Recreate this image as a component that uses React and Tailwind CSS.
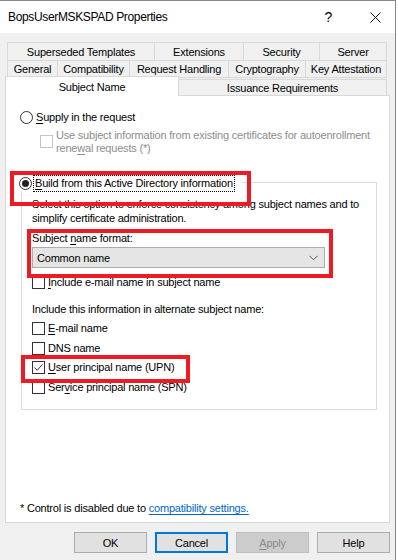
import React from 'react';

// Win10 property sheet: Subject Name tab with red annotation boxes on top
const U = ({ children }) => <span className="underline underline-offset-[2px] decoration-[1px]">{children}</span>;

const Radio = ({ checked }) => (
  <span className="w-[13px] h-[13px] rounded-full border border-[#333] bg-white flex items-center justify-center shrink-0">
    {checked && <span className="w-[7px] h-[7px] rounded-full bg-[#222]" />}
  </span>
);

const Check = ({ checked, disabled }) => (
  <span className={`w-[13px] h-[13px] border bg-white flex items-center justify-center shrink-0 ${disabled ? 'border-[#c4c4c4]' : 'border-[#333]'}`}>
    {checked && (
      <svg width="11" height="11" viewBox="0 0 11 11">
        <path d="M1.5 5.5 L4.2 8.3 L9.5 2.3" fill="none" stroke="#333" strokeWidth="1" />
      </svg>
    )}
  </span>
);

const Tab = ({ w, children }) => (
  <div className={`${w} h-full -ml-px first:ml-0 flex items-center justify-center border border-[#d9d9d9] bg-[#f0f0f0]`}>
    {children}
  </div>
);

const CheckRow = ({ checked, className = '', children }) => (
  <div className={`h-[14px] flex items-center gap-[3px] ${className}`}>
    <Check checked={checked} />
    <span>{children}</span>
  </div>
);

const Btn = ({ children, variant }) => {
  const v = {
    normal: 'bg-[#e1e1e1] border border-[#adadad] text-black',
    default: 'bg-[#e1e1e1] border-2 border-[#0078d7] text-black',
    disabled: 'bg-[#cccccc] border border-[#bfbfbf] text-[#8a8a8a]',
  };
  return (
    <div className={`w-[73px] h-[21px] flex items-center justify-center ${v[variant]}`}>{children}</div>
  );
};

export default function App() {
  return (
    <div className="relative w-[398px] h-[560px] bg-white overflow-hidden font-['Liberation_Sans',Arial,sans-serif] text-[11px] leading-[14px] tracking-[-0.2px] text-black">
      <div className="w-[396px] h-[560px] border-t border-r border-[#888] flex flex-col">
        {/* title bar */}
        <div className="h-[32px] shrink-0 bg-white flex items-center pl-[8px] pr-[14px]">
          <span className="text-[12px] tracking-[-0.35px]">BopsUserMSKSPAD Properties</span>
          <span className="ml-auto text-[14px] mr-[38px]">?</span>
          <svg width="11" height="11" viewBox="0 0 11 11">
            <path d="M0.5 0.5 L10.5 10.5 M10.5 0.5 L0.5 10.5" stroke="#111" strokeWidth="1" />
          </svg>
        </div>

        {/* body */}
        <div className="flex-1 bg-[#f0f0f0] px-[5px] pt-[9px] flex flex-col">
          <div className="ml-[2px] h-[19px] flex">
            <Tab w="w-[148px]">Superseded Templates</Tab>
            <Tab w="w-[90px]">Extensions</Tab>
            <Tab w="w-[77px]">Security</Tab>
            <Tab w="w-[68px]">Server</Tab>
          </div>
          <div className="ml-[2px] -mt-px h-[18px] flex">
            <Tab w="w-[51px]">General</Tab>
            <Tab w="w-[73px]">Compatibility</Tab>
            <Tab w="w-[100px]">Request Handling</Tab>
            <Tab w="w-[78px]">Cryptography</Tab>
            <Tab w="w-[82px]">Key Attestation</Tab>
          </div>
          <div className="h-[17px] flex items-end">
            <div className="relative z-10 w-[174px] h-[20px] -mb-px bg-white border border-b-0 border-[#d9d9d9] flex justify-center pt-[3px]">
              Subject Name
            </div>
            <div className="w-[209px] h-[16px] -ml-px border border-b-0 border-[#d9d9d9] bg-[#f0f0f0] flex items-center justify-center pt-[1px]">
              Issuance Requirements
            </div>
          </div>

          {/* page */}
          <div className="w-[385px] h-[428px] bg-white border border-[#d9d9d9] pl-[14px] flex flex-col">
            <div className="mt-[13px] h-[16px] flex items-center gap-[3px]">
              <Radio />
              <span><U>S</U>upply in the request</span>
            </div>
            <div className="mt-[4px] ml-[20px] flex items-start gap-[3px] text-[#8d8d8d] leading-[13px]">
              <span className="mt-[6px]"><Check disabled /></span>
              <span>Use subject information from existing certificates for autoenrollment<br />rene<U>w</U>al requests (*)</span>
            </div>

            <div className="mt-[27px] ml-px w-[356px] border border-[#dcdcdc] pl-[10px] pb-[15px]">
              <div className="-mt-[8px] -ml-[13px] h-[16px] w-fit bg-white pr-[7px] flex items-center gap-[2px]">
                <Radio checked />
                <span className="outline outline-1 outline-dotted outline-black px-px leading-[15px]">
                  <U>B</U>uild from this Active Directory information
                </span>
              </div>
              <p className="mt-[6px]">
                Select this option to enforce consistency among subject names and to<br />simplify certificate administration.
              </p>
              <p className="mt-[6px]">Subject <U>n</U>ame format:</p>
              <div className="mt-[2px] w-[293px] h-[21px] bg-[#e5e5e5] border border-[#adadad] flex items-center pl-[4px] pr-[6px]">
                <span>Common name</span>
                <svg className="ml-auto" width="9" height="6" viewBox="0 0 9 6">
                  <path d="M0.5 0.8 L4.5 4.8 L8.5 0.8" fill="none" stroke="#555" strokeWidth="1" />
                </svg>
              </div>
              <CheckRow className="mt-[7px]"><U>I</U>nclude e-mail name in subject name</CheckRow>
              <p className="mt-[13px]">Include this information in alternate subject name:</p>
              <CheckRow className="mt-[5px]"><U>E</U>-mail name</CheckRow>
              <CheckRow className="mt-[6px]">DNS name</CheckRow>
              <CheckRow className="mt-[5px]" checked><U>U</U>ser principal name (UPN)</CheckRow>
              <CheckRow className="mt-[6px]">Ser<U>v</U>ice principal name (SPN)</CheckRow>
            </div>

            <p className="mt-auto mb-[7px]">
              * Control is disabled due to <span className="text-[#0066cc] underline underline-offset-[2px]">compatibility settings.</span>
            </p>
          </div>

          <div className="mt-[9px] flex justify-end gap-[8px]">
            <Btn variant="normal">OK</Btn>
            <Btn variant="default">Cancel</Btn>
            <Btn variant="disabled"><U>A</U>pply</Btn>
            <Btn variant="normal">Help</Btn>
          </div>
        </div>
      </div>

      {/* red annotation boxes */}
      <div className="absolute left-[10px] top-[171px] w-[241px] h-[35px] border-[4px] border-[#ed1c24]" />
      <div className="absolute left-[27px] top-[229px] w-[306px] h-[49px] border-[4px] border-[#ed1c24]" />
      <div className="absolute left-[21px] top-[355px] w-[169px] h-[28px] border-[4px] border-[#ed1c24]" />
    </div>
  );
}
